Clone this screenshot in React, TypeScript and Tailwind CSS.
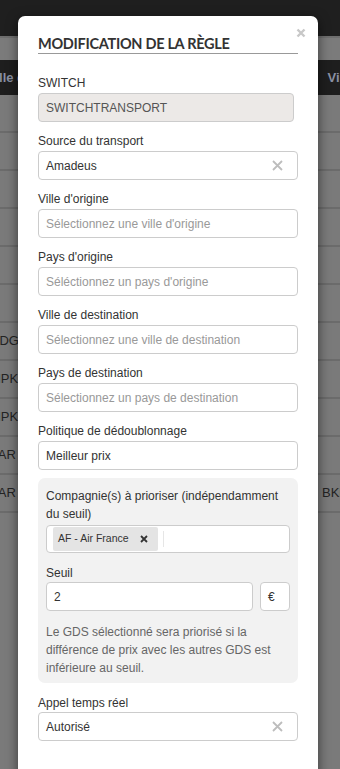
import React from 'react';

const rows = [
  { left: '', right: '' },
  { left: '', right: '' },
  { left: '', right: '' },
  { left: '', right: '' },
  { left: '', right: '' },
  { left: '', right: '' },
  { left: 'CDG', right: '' },
  { left: 'MPK', right: '' },
  { left: 'MPK', right: '' },
  { left: 'PAR', right: '' },
  { left: 'PAR', right: 'BKK' },
];

function ClearIcon() {
  return (
    <svg width="11" height="11" viewBox="0 0 11 11" className="shrink-0">
      <path d="M1 1L10 10M10 1L1 10" stroke="#bdbdbd" strokeWidth="1.8" />
    </svg>
  );
}

function Label({ children }: { children: React.ReactNode }) {
  return <label className="block text-[12px] leading-[16px] text-[#333] mb-[2px]">{children}</label>;
}

function Field({
  label,
  value,
  placeholder,
  clearable,
}: {
  label: string;
  value?: string;
  placeholder?: string;
  clearable?: boolean;
}) {
  return (
    <div className="mb-[11px]">
      <Label>{label}</Label>
      <div className="h-[29px] border border-[#cccccc] rounded-[4px] bg-white flex items-center pl-[7px] pr-[14px]">
        <span className={`flex-1 text-[12px] ${value ? 'text-[#333]' : 'text-[#999]'}`}>
          {value || placeholder}
        </span>
        {clearable && <ClearIcon />}
      </div>
    </div>
  );
}

export default function App() {
  return (
    <div
      className="relative h-[769px] w-[340px] overflow-hidden bg-[#7a7a7a]"
      style={{ fontFamily: '"Liberation Sans", Arial, sans-serif' }}
    >
      {/* page behind the backdrop */}
      <div className="h-[36px] bg-[#1f1f1f]" />
      <div className="h-[24px] bg-[#7b7b7b] border-t-2 border-[#6e6e6e]" />
      <div className="h-[35px] bg-[#1e1e1e] flex items-center justify-between text-[13px] font-bold text-[#8a90a3] overflow-hidden">
        <span className="-ml-[13px] whitespace-nowrap">Ville d'origine</span>
        <span className="-mr-[14px] whitespace-nowrap">Ville</span>
      </div>
      {rows.map((r, i) => (
        <div
          key={i}
          className="h-[38px] border-b-2 border-[#6b6b6b] flex items-center justify-between text-[13px] text-[#232323] overflow-hidden"
        >
          <span className="-ml-[10px]">{r.left}</span>
          <span className="-mr-[8px]">{r.right}</span>
        </div>
      ))}

      {/* modal */}
      <div className="absolute left-[18px] top-[16px] w-[300px] h-[800px] bg-white rounded-[7px] shadow-[0_3px_12px_rgba(0,0,0,0.55)] px-[20px] pt-[19px]">
        <button className="absolute right-[12px] top-[12px]">
          <svg width="10" height="10" viewBox="0 0 10 10">
            <path d="M1.5 1.5L8.5 8.5M8.5 1.5L1.5 8.5" stroke="#c8c8c8" strokeWidth="2.4" />
          </svg>
        </button>

        <h2
          className="text-[14.5px] leading-[18px] font-bold text-[#333] border-b border-[#999] tracking-[-0.3px]"
          style={{ fontFamily: 'Lato, "Liberation Sans", sans-serif' }}
        >
          MODIFICATION DE LA RÈGLE
        </h2>

        <div className="mt-[21px] mb-[11px]">
          <Label>SWITCH</Label>
          <div className="h-[29px] w-[256px] border border-[#cccccc] rounded-[4px] bg-[#ece9e7] flex items-center pl-[7px] text-[12px] text-[#555]">
            SWITCHTRANSPORT
          </div>
        </div>

        <Field label="Source du transport" value="Amadeus" clearable />
        <Field label="Ville d'origine" placeholder="Sélectionnez une ville d'origine" />
        <Field label="Pays d'origine" placeholder="Séléctionnez un pays d'origine" />
        <Field label="Ville de destination" placeholder="Sélectionnez une ville de destination" />
        <Field label="Pays de destination" placeholder="Sélectionnez un pays de destination" />

        <div className="mb-[8px]">
          <Label>Politique de dédoublonnage</Label>
          <div className="h-[29px] border border-[#cccccc] rounded-[4px] bg-white flex items-center pl-[7px] text-[12px] text-[#333]">
            Meilleur prix
          </div>
        </div>

        <div className="bg-[#f2f2f2] rounded-[7px] px-[8px] pt-[9px] pb-[6px]">
          <div className="text-[12px] leading-[18px] text-[#333] mb-[2px]">
            Compagnie(s) à prioriser (indépendamment du seuil)
          </div>
          <div className="h-[28px] border border-[#cccccc] rounded-[4px] bg-white flex items-center pl-[6px]">
            <span className="h-[24px] bg-[#e4e4e4] rounded-[2px] flex items-center pl-[5px] pr-[10px] text-[10.5px] text-[#333]">
              AF - Air France
              <svg width="8" height="8" viewBox="0 0 8 8" className="ml-[11px]">
                <path d="M1 1L7 7M7 1L1 7" stroke="#333" strokeWidth="1.8" />
              </svg>
            </span>
            <span className="ml-[5px] w-px h-[16px] bg-[#e6e6e6]" />
          </div>

          <div className="mt-[12px] text-[12px] leading-[16px] text-[#333] mb-px">Seuil</div>
          <div className="flex gap-[7px]">
            <div className="flex-1 h-[29px] border border-[#cccccc] rounded-[4px] bg-white flex items-center pl-[7px] text-[12px] text-[#333]">
              2
            </div>
            <div className="w-[30px] h-[29px] border border-[#cccccc] rounded-[4px] bg-white flex items-center pl-[7px] text-[12px] text-[#333]">
              €
            </div>
          </div>

          <p className="mt-[12px] text-[12px] leading-[18px] text-[#666]">
            Le GDS sélectionné sera priorisé si la différence de prix avec les autres GDS est inférieure au seuil.
          </p>
        </div>

        <div className="mt-[12px]">
          <div className="text-[12px] leading-[16px] text-[#333] mb-px">Appel temps réel</div>
          <div className="h-[29px] border border-[#cccccc] rounded-[4px] bg-white flex items-center pl-[7px] pr-[14px]">
            <span className="flex-1 text-[12px] text-[#333]">Autorisé</span>
            <ClearIcon />
          </div>
        </div>
      </div>
    </div>
  );
}
